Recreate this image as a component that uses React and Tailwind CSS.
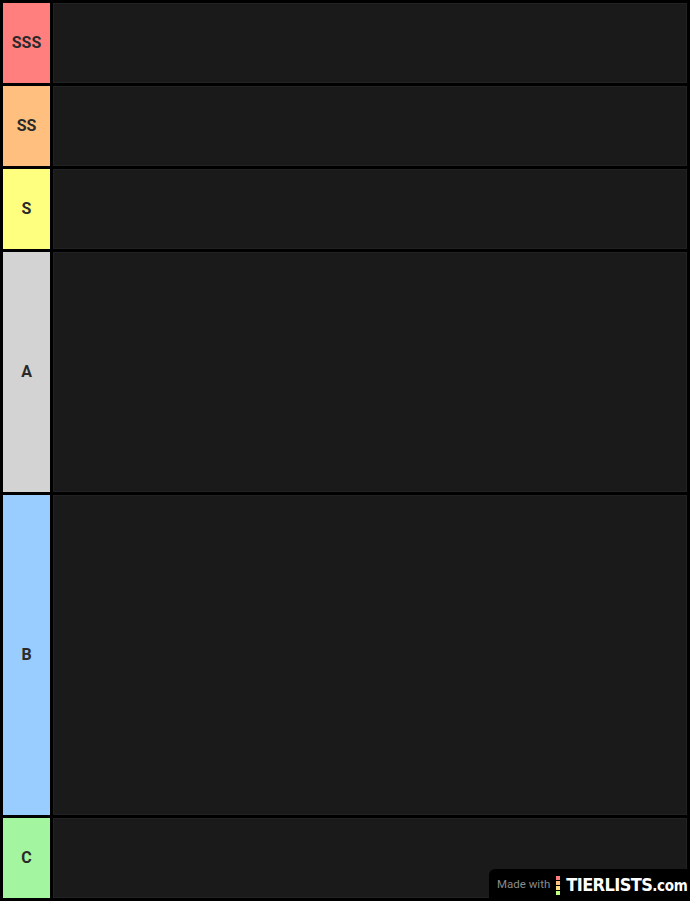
import React from "react";

const tiers = [
  { label: "SSS", color: "bg-[#ff7f7f]", h: "h-[80px]" },
  { label: "SS", color: "bg-[#ffbf7f]", h: "h-[80px]" },
  { label: "S", color: "bg-[#ffff7f]", h: "h-[80px]" },
  { label: "A", color: "bg-[#d3d3d3]", h: "h-[240px]" },
  { label: "B", color: "bg-[#99ccff]", h: "h-[320px]" },
  { label: "C", color: "bg-[#a3f5a0]", h: "h-[80px]" },
];

const Watermark = () => (
  <div className="absolute right-0 bottom-0 flex h-[32px] w-[201px] items-center whitespace-nowrap rounded-tl-[6px] bg-black pl-[8px]">
    <span className="shrink-0 text-[11.5px] text-[#8a8a8a]" style={{ fontFamily: "Roboto, sans-serif" }}>
      Made with
    </span>
    <div className="ml-[6px] flex shrink-0 flex-col gap-[1px]">
      <div className="h-[4px] w-[4px] bg-[#ff7f7f]"></div>
      <div className="h-[4px] w-[4px] bg-[#ffbf7f]"></div>
      <div className="h-[4px] w-[4px] bg-[#ffdf7f]"></div>
      <div className="h-[4px] w-[4px] bg-[#bfff7f]"></div>
    </div>
    <span
      className="ml-[6px] shrink-0 text-[18px] font-bold leading-none tracking-[-0.6px] text-white"
      style={{ fontFamily: "'DejaVu Sans Condensed', 'DejaVu Sans', sans-serif", fontStretch: "condensed" }}
    >
      TIERLISTS<span className="text-[15px] tracking-[-0.3px]">.com</span>
    </span>
  </div>
);

export default function App() {
  return (
    <div className="relative flex min-h-[901px] w-full flex-col gap-[3px] bg-black p-[3px]">
      {tiers.map((t) => (
        <div key={t.label} className={`flex gap-[3px] ${t.h}`}>
          <div
            className={`flex w-[47px] shrink-0 items-center justify-center ${t.color} text-[16px] font-bold text-[#2a2a2a]`}
            style={{ fontFamily: "Roboto, sans-serif" }}
          >
            {t.label}
          </div>
          <div className="flex-1 border border-[#222] bg-[#1a1a1a]"></div>
        </div>
      ))}
      <Watermark />
    </div>
  );
}
